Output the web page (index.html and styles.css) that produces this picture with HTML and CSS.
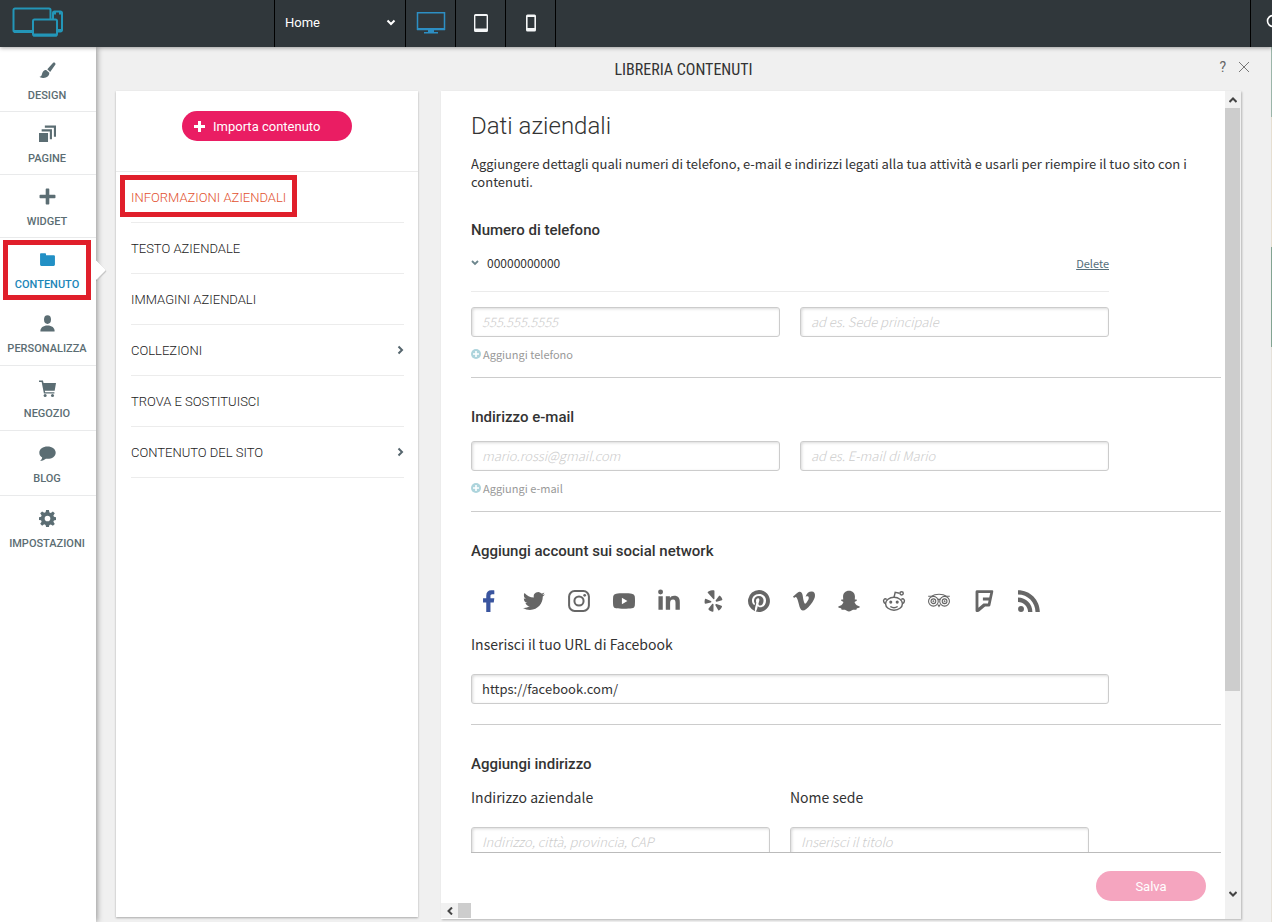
FILE: index.html
```html
<!DOCTYPE html>
<html lang="it">
<head>
<meta charset="utf-8">
<title>Libreria contenuti</title>
<link rel="stylesheet" href="styles.css">
</head>
<body>
<header class="topbar">
  <div class="brand">
    <svg width="52" height="32" viewBox="0 0 52 32" fill="none" stroke="#2396b8" stroke-width="2"><path d="M20 25H3a1.500 1.500 0 0 1-1.500-1.500V3A1.500 1.500 0 0 1 3 1.500h34A1.500 1.500 0 0 1 38.500 3v9"/><path d="M2 24.500h18" stroke-width="3"/><path d="M41 12V6a1.500 1.500 0 0 1 1.500-1.500h6A1.500 1.500 0 0 1 50 6v17a1.500 1.500 0 0 1-1.500 1.500H46"/><path d="M41 6h3M47 6h3M46 23.500h4" stroke-width="3"/><rect x="21" y="12.500" width="24" height="16" rx="1.500"/><path d="M21 28h24" stroke-width="3"/></svg>
  </div>
  <button class="page-select" type="button"><span>Home</span>
    <svg width="10" height="7" viewBox="0 0 10 7" fill="none" stroke="#fff" stroke-width="2"><path d="M1.500 1.500 5 5l3.500-3.500"/></svg>
  </button>
  <button class="device" type="button" aria-label="Desktop">
    <svg width="30" height="24" viewBox="0 0 30 24"><path fill="none" stroke="#2d8fc4" stroke-width="1.500" d="M1.500 1.700h27v16.500h-27z"/><path d="M1 17h28v2.200H1zM12 19h6v2h4v1.500H8V21h4z" fill="#2d8fc4"/></svg>
  </button>
  <button class="device" type="button" aria-label="Tablet">
    <svg width="16" height="20" viewBox="0 0 16 20" fill="#f4f6f7" fill-rule="evenodd"><path d="M2.500 1h11A1.500 1.500 0 0 1 15 2.500v15a1.500 1.500 0 0 1-1.500 1.500h-11A1.500 1.500 0 0 1 1 17.500v-15A1.500 1.500 0 0 1 2.500 1zM2.400 3v12.500h11.200V3z"/></svg>
  </button>
  <button class="device" type="button" aria-label="Smartphone">
    <svg width="12" height="18" viewBox="0 0 12 18" fill="#f4f6f7" fill-rule="evenodd"><path d="M2.500.5h7A1.500 1.500 0 0 1 11 2v14a1.500 1.500 0 0 1-1.500 1.500h-7A1.500 1.500 0 0 1 1 16V2A1.500 1.500 0 0 1 2.500.5zM2.600 3v11h6.800V3z"/></svg>
  </button>
  <div class="topbar-space"></div>
  <button class="history" type="button" aria-label="Annulla">
    <svg width="14" height="14" viewBox="0 0 14 14" fill="none" stroke="#fff" stroke-width="1.600"><circle cx="7" cy="7" r="5.500"/></svg>
  </button>
</header>

<div class="workspace">
  <nav class="sidebar">
    <a class="side-item" href="#design"><svg class="side-icon" viewBox="0 0 16 16"><path d="M13.300.7c1.100-1 2.900.5 2 1.900L10.500 9.300 7.800 6.900zM7 7.700l2.700 2.400c.2 3.200-2.500 5.200-6 4.900-1.600-.1-2.700-.7-3.200-1.200 2.600-.2 2-2.900 3.200-4.700.9-1.300 2.300-1.700 3.300-1.400z"/></svg>DESIGN</a>
    <a class="side-item" href="#pagine"><svg class="side-icon" viewBox="0 0 16 16"><path d="M0 7.500h8.500V16H0zM2.500 4h9.700v9.500h-2V6H2.500zM5.500.5H16V11h-2V2.500H5.500z"/></svg>PAGINE</a>
    <a class="side-item" href="#widget"><svg class="side-icon" viewBox="0 0 16 16"><path d="M6.300 1.200q0-.7.700-.7h2q.7 0 .7.700v5.100h5q.8 0 .8.700v2q0 .7-.8.700h-5v5.100q0 .7-.7.700H7q-.7 0-.7-.7V9.700h-5Q.5 9.700.5 9V7q0-.7.8-.7h5z"/></svg>WIDGET</a>
    <a class="side-item active" href="#contenuto" aria-current="page"><svg class="side-icon" viewBox="0 0 16 16"><path d="M1 2.800Q1 2 1.800 2h4q.8 0 .8.800V4h7.300q1.100 0 1.100 1v7.800q0 1.200-1.200 1.200H2.200Q1 14 1 12.800z"/></svg>CONTENUTO</a>
    <a class="side-item tall" href="#personalizza"><svg class="side-icon" viewBox="0 0 16 18"><ellipse cx="8" cy="4.800" rx="3.700" ry="4.600"/><path d="M.5 17.500c-.3-4 3-6.300 7.500-6.300s7.800 2.300 7.500 6.300z"/></svg>PERSONALIZZA</a>
    <a class="side-item tall" href="#negozio"><svg class="side-icon" viewBox="0 0 18 18"><path d="M0 .5h4.200l.6 2.700H18l-1.400 8.300H6.200l.3 1.400h9.800v1.300H5.200L2.800 2H0z"/><circle cx="6.500" cy="16.300" r="1.600"/><circle cx="14.300" cy="16.300" r="1.600"/></svg>NEGOZIO</a>
    <a class="side-item tall" href="#blog"><svg class="side-icon" viewBox="0 0 16 16"><path d="M8 1.500c4.300 0 7.700 2.400 7.700 5.700S12.300 13 8 13l-1.500-.1C5 14.200 3 14.900 1 14.800c1.300-.9 1.900-2 2-3C1.200 10.600.3 9 .3 7.200.3 3.900 3.700 1.500 8 1.500z"/></svg>BLOG</a>
    <a class="side-item tall last" href="#impostazioni"><svg class="side-icon" viewBox="0 0 24 24" fill-rule="evenodd"><path d="m10 0h4l.7 3.500 2 .8L19.600 2l2.700 2.700-2 2.900.8 2 3.400.6v3.900l-3.400.6-.8 2 2 2.900-2.700 2.700-2.900-2-2 .8L14 24h-4l-.7-3-2-.8-2.900 2-2.700-2.700 2-2.900-.8-2-2.900-.5v-4l2.900-.5.8-2-2-2.900 2.700-2.700 2.900 2 2-.8zM12 8a4 4 0 1 0 0 8 4 4 0 0 0 0-8z"/></svg>IMPOSTAZIONI</a>
  </nav>

  <main class="library">
    <div class="library-head">
      <h1 class="library-title">LIBRERIA CONTENUTI</h1>
      <div class="head-tools">
        <button class="plain" type="button" aria-label="Aiuto">?</button>
        <button class="plain" type="button" aria-label="Chiudi"><svg width="12" height="12" viewBox="0 0 12 12" stroke="#777" fill="none"><path d="m1 1 10 10M11 1 1 11"/></svg></button>
      </div>
    </div>

    <div class="panels">
      <aside class="menu-card">
        <div class="import-area">
          <button class="pill import" type="button"><svg width="11" height="11" viewBox="0 0 11 11" fill="#fff"><path d="M4 0h3v4h4v3H7v4H4V7H0V4h4z"/></svg>Importa contenuto</button>
        </div>
        <nav class="menu">
          <a class="menu-item selected" href="#info">INFORMAZIONI AZIENDALI</a>
          <a class="menu-item" href="#testo">TESTO AZIENDALE</a>
          <a class="menu-item" href="#immagini">IMMAGINI AZIENDALI</a>
          <a class="menu-item" href="#collezioni">COLLEZIONI<svg width="7" height="10" viewBox="0 0 7 10" fill="none" stroke="#56666e" stroke-width="2"><path d="m1.500 1.500 3.500 3.500-3.500 3.500"/></svg></a>
          <a class="menu-item" href="#trova">TROVA E SOSTITUISCI</a>
          <a class="menu-item" href="#sito">CONTENUTO DEL SITO<svg width="7" height="10" viewBox="0 0 7 10" fill="none" stroke="#56666e" stroke-width="2"><path d="m1.500 1.500 3.500 3.500-3.500 3.500"/></svg></a>
        </nav>
      </aside>

      <section class="data-card">
        <div class="data-body">
          <div class="data-scroll">
            <h2 class="data-title">Dati aziendali</h2>
            <p class="intro">Aggiungere dettagli quali numeri di telefono, e-mail e indirizzi legati alla tua attività e usarli per riempire il tuo sito con i contenuti.</p>

            <div class="group">
              <h3 class="group-title">Numero di telefono</h3>
              <div class="phone-row">
                <svg width="8" height="6" viewBox="0 0 8 6" fill="none" stroke="#6d868d" stroke-width="1.800"><path d="m1 1 3 3 3-3"/></svg>
                <span class="phone">00000000000</span>
                <a class="delete" href="#delete">Delete</a>
              </div>
              <div class="fields">
                <input class="field" type="text" placeholder="555.555.5555" aria-label="Telefono">
                <input class="field" type="text" placeholder="ad es. Sede principale" aria-label="Etichetta telefono">
              </div>
              <button class="add" type="button"><svg width="10" height="10" viewBox="0 0 10 10"><circle cx="5" cy="5" r="5" fill="#add4dc"/><path d="M5 2v6M2 5h6" stroke="#fff" stroke-width="1.600"/></svg>Aggiungi telefono</button>
            </div>

            <div class="group">
              <h3 class="group-title">Indirizzo e-mail</h3>
              <div class="fields near">
                <input class="field" type="email" placeholder="mario.rossi@gmail.com" aria-label="E-mail">
                <input class="field" type="text" placeholder="ad es. E-mail di Mario" aria-label="Etichetta e-mail">
              </div>
              <button class="add" type="button"><svg width="10" height="10" viewBox="0 0 10 10"><circle cx="5" cy="5" r="5" fill="#add4dc"/><path d="M5 2v6M2 5h6" stroke="#fff" stroke-width="1.600"/></svg>Aggiungi e-mail</button>
            </div>

            <div class="group">
              <h3 class="group-title">Aggiungi account sui social network</h3>
              <div class="socials">
                <button class="social fb" type="button" aria-label="Facebook"><svg viewBox="0 0 24 24"><path d="M9 24V13.500H5.500V9H9V6.200C9 2.400 11 .3 14.500.3c1.500 0 2.900.1 3.300.2v4.100h-2.200c-1.600 0-2 .8-2 2V9h4.200l-.6 4.500h-3.600V24z"/></svg></button>
                <button class="social" type="button" aria-label="Twitter"><svg viewBox="0 0 24 24"><path d="M23.950 4.570a10 10 0 0 1-2.820.770 4.960 4.960 0 0 0 2.160-2.720c-.95.550-2 .950-3.130 1.180a4.920 4.920 0 0 0-8.380 4.480C7.690 8.090 4.070 6.130 1.640 3.160a4.820 4.820 0 0 0-.67 2.480c0 1.710.87 3.210 2.190 4.100a4.900 4.900 0 0 1-2.230-.62v.06a4.920 4.920 0 0 0 3.950 4.830 5 5 0 0 1-2.210.08 4.940 4.940 0 0 0 4.600 3.420A9.870 9.870 0 0 1 0 19.540a13.990 13.990 0 0 0 7.550 2.210c9.050 0 14-7.500 14-13.980 0-.21 0-.42-.02-.63a9.930 9.930 0 0 0 2.420-2.570z"/></svg></button>
                <button class="social" type="button" aria-label="Instagram"><svg viewBox="0 0 24 24"><rect x="1.200" y="1.200" width="21.600" height="21.600" rx="6" fill="none" stroke="#666" stroke-width="2.200"/><circle cx="12" cy="12" r="5" fill="none" stroke="#666" stroke-width="2.200"/><circle cx="18.200" cy="5.800" r="1.500"/></svg></button>
                <button class="social" type="button" aria-label="YouTube"><svg viewBox="0 0 24 24" fill-rule="evenodd"><path d="M3.500 4C7 3.300 17 3.300 20.500 4c2.200.4 3 1.600 3.300 3.200.3 3 .3 6.600 0 9.600-.3 1.600-1.100 2.800-3.300 3.200-3.500.7-13.500.7-17 0-2.200-.4-3-1.600-3.300-3.200-.3-3-.3-6.600 0-9.600C.5 5.600 1.300 4.400 3.500 4zm6.200 4.500v7l6-3.500z"/></svg></button>
                <button class="social" type="button" aria-label="LinkedIn"><svg viewBox="0 0 24 24"><path d="M.5 6.800h4.700V21.500H.5zM2.800-.5a2.700 2.700 0 1 1 0 5.400 2.700 2.700 0 0 1 0-5.400zM8.500 6.800H13v2c.9-1.500 2.500-2.400 4.600-2.400 4.700 0 6.200 2.700 6.200 7.100v8h-4.700v-7.300c0-2-.3-3.900-2.700-3.900-2.500 0-3.200 1.800-3.200 3.900v7.300H8.500z"/></svg></button>
                <button class="social" type="button" aria-label="Yelp"><svg viewBox="0 0 24 24"><path d="M5.500 1.800C7.500.6 10 .2 11.700.3c.5 0 .8.300.8.800v8.300c0 .8-.9 1-1.300.4L5.200 2.900c-.3-.4-.2-.8.300-1.100zM2.900 9.600l5.700 2.300c.8.400.7 1.500-.1 1.700l-5.700 1.300c-.5.100-.9-.2-1-.7-.2-1.400-.1-2.900.3-4.100.1-.5.500-.7.800-.5zM10 15.200c.6-.6 1.500-.3 1.500.6l-.1 7.200c0 .5-.4.800-.9.700-1.400-.3-3.300-1.200-4.300-2.200-.4-.3-.4-.8-.1-1.200zM14.700 15.300l5.500 1.900c.5.200.7.600.5 1.100-.6 1.500-1.700 3-2.900 3.900-.4.300-.9.200-1.100-.2l-3.200-5.300c-.4-.7.300-1.700 1.200-1.400zM13.900 11.300l3.500-4.800c.3-.4.700-.4 1.100-.1 1.100.9 2.100 2.300 2.600 3.700.2.500-.1.900-.5 1l-5.600 1.600c-.9.200-1.600-.7-1.100-1.400z"/></svg></button>
                <button class="social" type="button" aria-label="Pinterest"><svg viewBox="0 0 24 24"><path d="M12 0a12 12 0 0 0-4.370 23.170c-.1-.94-.2-2.400.04-3.430l1.410-5.960s-.36-.72-.36-1.780c0-1.670.97-2.910 2.170-2.910 1.020 0 1.520.77 1.520 1.690 0 1.030-.65 2.570-.99 3.990-.29 1.190.6 2.170 1.770 2.170 2.130 0 3.770-2.250 3.770-5.490 0-2.870-2.060-4.870-5.010-4.870a5.190 5.190 0 0 0-5.410 5.200c0 1.030.39 2.140.89 2.740.1.120.11.230.08.350l-.33 1.360c-.05.220-.17.260-.4.160-1.500-.7-2.430-2.880-2.430-4.650 0-3.780 2.750-7.260 7.930-7.260 4.160 0 7.400 2.970 7.400 6.930 0 4.140-2.610 7.460-6.230 7.460-1.210 0-2.360-.63-2.750-1.380l-.75 2.850c-.27 1.050-1 2.350-1.490 3.150A12 12 0 1 0 12 0z"/></svg></button>
                <button class="social" type="button" aria-label="Vimeo"><svg viewBox="0 0 24 24"><path d="M23.980 6.420c-.11 2.340-1.740 5.540-4.900 9.600C15.810 20.260 13.050 22.380 10.790 22.380c-1.400 0-2.580-1.290-3.550-3.880L5.300 11.400C4.580 8.820 3.810 7.530 2.990 7.530c-.18 0-.81.380-1.880 1.130L0 7.200c1.180-1.040 2.350-2.080 3.500-3.120 1.580-1.370 2.770-2.090 3.560-2.160 1.870-.18 3.020 1.100 3.450 3.840.47 2.950.79 4.790.97 5.510.54 2.450 1.130 3.670 1.780 3.670.5 0 1.260-.8 2.270-2.390 1-1.590 1.540-2.800 1.620-3.630.14-1.370-.4-2.060-1.620-2.060-.58 0-1.170.13-1.780.39C14.930 3.400 17.190 1.500 20.530 1.610c2.480.070 3.650 1.680 3.450 4.810z"/></svg></button>
                <button class="social" type="button" aria-label="Snapchat"><svg viewBox="0 0 24 24"><path d="M12 .8c4 0 6.500 2.600 6.500 6.500l-.2 3.100c.7.300 1.500-.4 2.100.1.900.9-.6 1.600-1.600 2-.8.400-.7 1-.3 1.800 1 2 2.500 3.100 5 3.600.6.200.4.900-.1 1.200-.7.500-1.700.7-2.700.9-.4.400-.2 1.200-.7 1.500-.8.300-2.400-.2-3.600.1-1.600.4-2.500 1.900-4.400 1.900s-2.800-1.500-4.400-1.900c-1.200-.3-2.800.2-3.600-.1-.5-.3-.3-1.100-.7-1.500-1-.2-2-.4-2.700-.9-.5-.3-.7-1-.1-1.200 2.500-.5 4-1.600 5-3.600.4-.8.500-1.400-.3-1.800-1-.4-2.500-1.100-1.600-2 .6-.5 1.400.2 2.100-.1l-.2-3.100C5.500 3.400 8 .8 12 .8z"/></svg></button>
                <button class="social line" type="button" aria-label="Reddit"><svg viewBox="0 0 24 24"><ellipse cx="12" cy="15" rx="9.200" ry="7"/><path d="M4 10.500C2 8.500 0 10.500.8 12.800c.3.900 1 1.600 2 1.900M20 10.500c2-2 4 0 3.200 2.300-.3.900-1 1.600-2 1.900M12 8l1.300-5.500 4.700 1"/><circle cx="20.300" cy="3.600" r="1.800"/><path d="M8 18c2.200 1.500 5.800 1.500 8 0"/><circle cx="8.500" cy="13.200" r=".9"/><circle cx="15.500" cy="13.200" r=".9"/></svg></button>
                <button class="social line thin" type="button" aria-label="TripAdvisor"><svg viewBox="0 0 24 24"><circle cx="5.900" cy="12.300" r="5.300"/><circle cx="18.100" cy="12.300" r="5.300"/><circle cx="5.900" cy="12.300" r="2.600"/><circle cx="18.100" cy="12.300" r="2.600"/><circle cx="5.900" cy="12.300" r=".4"/><circle cx="18.100" cy="12.300" r=".4"/><path d="M.2 6.800h3.600C8 4 16 4 20.200 6.800h3.600M10.700 15.800 12 18l1.300-2.200M11 11q1-2 2 0"/></svg></button>
                <button class="social" type="button" aria-label="Foursquare"><svg viewBox="0 0 24 24"><path fill-rule="evenodd" d="M4 .3h16.800q1.600 0 1.300 1.500l-3.200 15q-.3 1.200-1.500 1.200h-4.200l-6.500 5.500q-3.900 1.500-3.900-1V2q0-1.700 1.200-1.700zM5.900 3.400v16l5.500-4.600h4.900l.7-3.300h-6.200V8.300h6.900l1.100-4.900z"/></svg></button>
                <button class="social" type="button" aria-label="RSS"><svg viewBox="0 0 24 24"><path d="M0 .2C13.200.2 23.800 10.800 23.800 24h-4.700C19.100 13.400 10.600 4.900 0 4.900zM0 8.300c8.700 0 15.700 7 15.700 15.700H11c0-6.100-4.900-11-11-11z"/><circle cx="3.300" cy="20.700" r="3.200"/></svg></button>
              </div>
              <label class="label" for="fb-url">Inserisci il tuo URL di Facebook</label>
              <div class="fields spaced">
                <input class="field" id="fb-url" type="text" value="https://facebook.com/">
              </div>
            </div>

            <div class="group">
              <h3 class="group-title">Aggiungi indirizzo</h3>
              <div class="address">
                <div class="column"><label class="label" for="addr">Indirizzo aziendale</label><input class="field" id="addr" type="text" placeholder="Indirizzo, città, provincia, CAP"></div>
                <div class="column"><label class="label" for="place">Nome sede</label><input class="field" id="place" type="text" placeholder="Inserisci il titolo"></div>
              </div>
            </div>
          </div>
          <div class="data-foot"><button class="pill save" type="button">Salva</button></div>
          <div class="hbar"><span class="arrow"><svg width="6" height="8" viewBox="0 0 6 8" fill="none" stroke="#444" stroke-width="2"><path d="M5 .5 1.500 4 5 7.500"/></svg></span><span class="hthumb"></span></div>
        </div>
        <div class="vbar">
          <span class="arrow"><svg width="8" height="6" viewBox="0 0 8 6" fill="none" stroke="#444" stroke-width="2"><path d="M.5 5 4 1.500 7.500 5"/></svg></span>
          <span class="vtrack"><span class="vthumb"></span></span>
          <span class="arrow low"><svg width="8" height="6" viewBox="0 0 8 6" fill="none" stroke="#444" stroke-width="2"><path d="M.5 1 4 4.500 7.500 1"/></svg></span>
        </div>
      </section>
    </div>
  </main>
  <div class="site-edge"></div>
</div>
</body>
</html>
```

FILE: styles.css
```css
*, *::before, *::after { box-sizing: border-box; }
body {
  margin: 0;
  height: 100vh;
  display: flex;
  flex-direction: column;
  overflow: hidden;
  background: #f0f0f0;
  color: #333;
  font-family: Roboto, "Liberation Sans", sans-serif;
}
h1, h2, h3, p { margin: 0; }
a { color: inherit; text-decoration: none; }
button { font: inherit; color: inherit; border: 0; padding: 0; background: none; cursor: pointer; }
svg { flex: none; display: block; }

.topbar {
  position: relative;
  z-index: 2;
  flex: none;
  display: flex;
  height: 47px;
  background: #30373b;
  box-shadow: 0 1px 4px rgba(0, 0, 0, .35);
}
.brand { width: 274px; padding: 7px 12px; }
.page-select {
  width: 131px;
  padding: 0 9px 2px 10px;
  display: flex;
  align-items: center;
  justify-content: space-between;
  border-left: 1px solid #000;
  color: #fff;
  font-size: 13px;
}
.device {
  width: 50px;
  padding-bottom: 2px;
  display: flex;
  align-items: center;
  justify-content: center;
  border-left: 1px solid #000;
}
.topbar-space { flex: 1; border-left: 1px solid #000; }
.history { width: 22px; padding: 0 0 6px 15px; display: flex; align-items: center; border-left: 1px solid #000; }

.workspace { flex: 1; min-height: 0; display: flex; }
.sidebar {
  position: relative;
  z-index: 1;
  width: 96px;
  flex: none;
  padding-top: 2px;
  background: #fff;
  box-shadow: 1px 0 6px rgba(0, 0, 0, .4);
}
.side-item {
  position: relative;
  height: 63px;
  padding: 5px 2px 0 0;
  display: flex;
  flex-direction: column;
  align-items: center;
  justify-content: center;
  gap: 9px;
  border-bottom: 1px solid #e9eaeb;
  color: #5b6d73;
  font-size: 11px;
  line-height: 16px;
  font-weight: 500;
}
.side-item.tall { height: 65px; }
.side-item.last { border-color: transparent; }
.side-icon { width: 17px; height: 17px; fill: #5b6d73; }
.side-item.active { color: #1c86b8; border-color: transparent; }
.active .side-icon { fill: #2290c5; }
.side-item.active::before {
  content: "";
  position: absolute;
  right: -7px;
  top: 25px;
  width: 14px;
  height: 14px;
  background: #fff;
  transform: rotate(45deg);
  box-shadow: 1px -1px 0 #ccc, 1px 1px 1px #999;
  clip-path: polygon(0 0, 140% 0, 140% 140%);
}
.side-item.active::after {
  content: "";
  position: absolute;
  inset: 2px 5px 0 3px;
  border: 5px solid #e01f2b;
}

.library { flex: 1; min-width: 0; display: flex; flex-direction: column; padding: 0 30px 3px 20px; }
.library-head { position: relative; flex: none; height: 44px; display: flex; align-items: center; justify-content: center; padding-left: 10px; }
.library-title { font: 400 16px "Roboto Condensed", "Liberation Sans Narrow", Roboto, sans-serif; color: #333; }
.head-tools { position: absolute; right: -9px; top: 8px; display: flex; gap: 12px; align-items: center; }
.plain { color: #666; font-size: 14px; line-height: 24px; }

.panels { flex: 1; min-height: 0; display: flex; gap: 23px; }
.menu-card { width: 302px; flex: none; margin-bottom: 2px; background: #fff; box-shadow: 0 1px 2px rgba(0, 0, 0, .3); }
.import-area { height: 81px; padding-top: 20px; padding-left: 66px; border-bottom: 1px solid #ebebeb; }
.pill { height: 30px; border-radius: 15px; color: #fff; font-size: 13px; }
.import { width: 170px; display: flex; align-items: center; gap: 8px; padding-left: 12px; background: #ea1d63; }
.menu { padding: 0 14px 0 15px; }
.menu-item {
  position: relative;
  height: 51px;
  display: flex;
  align-items: center;
  justify-content: space-between;
  border-bottom: 1px solid #ececec;
  font-size: 13px;
  font-weight: 300;
  color: #222;
}
.menu-item.selected { color: #e2512f; }
.menu-item.selected::after {
  content: "";
  position: absolute;
  left: -11px;
  top: 3px;
  width: 177px;
  height: 42px;
  border: 5px solid #e01f2b;
}

.data-card { flex: 1; min-width: 0; display: flex; background: #fff; box-shadow: 1px 1px 2px rgba(0, 0, 0, .25); }
.data-body { flex: 1; min-width: 0; display: flex; flex-direction: column; font-family: "Noto Sans CJK SC", "Open Sans", sans-serif; }
.data-scroll { flex: 1; min-height: 0; overflow: hidden; margin: 0 4px 0 30px; padding-top: 20px; }
.data-title { font: 300 24px/30px Roboto, sans-serif; }
.intro { margin-top: 14px; padding-right: 20px; font-size: 13px; line-height: 18px; }
.group { border-bottom: 1px solid #ccc; padding-bottom: 12px; }
.intro + .group, .group + .group { padding-top: 29px; }
.group:has(.spaced) { padding-bottom: 20px; }
.group-title { font: 500 15px/20px Roboto, sans-serif; }
.phone-row { max-width: 638px; margin-top: 11px; padding-bottom: 16px; border-bottom: 1px solid #ebebeb; display: flex; align-items: center; gap: 8px; font-size: 12px; line-height: 24px; }
.phone { flex: 1; }
.delete { color: #546e7a; font-size: 11px; line-height: 20px; text-decoration: underline; }
.fields { display: flex; gap: 20px; max-width: 638px; margin-top: 15px; }
.fields.near { margin-top: 14px; }
.fields.spaced { margin-top: 20px; }
.field {
  flex: 1;
  min-width: 0;
  width: 100%;
  height: 30px;
  padding: 0 10px 2px;
  border: 1px solid #ccc;
  border-radius: 3px;
  background: #fff;
  box-shadow: inset 1px 1px 3px rgba(0, 0, 0, .15);
  font: 400 13px "Noto Sans CJK SC", "Open Sans", sans-serif;
  color: #333;
}
.field::placeholder { color: #ccc; font-style: italic; font-weight: 300; opacity: 1; }
.add { display: flex; align-items: center; gap: 2px; margin-top: 7px; margin-bottom: 1px; font-size: 11px; line-height: 20px; color: #999; }
.socials { display: flex; gap: 9px; margin-top: 25px; }
.social { width: 36px; height: 30px; display: flex; align-items: center; justify-content: center; fill: #666; }
.social svg { width: 22px; height: 22px; overflow: visible; }
.social.fb { fill: #3a559f; }
.social.line { fill: none; stroke: #666; stroke-width: 1.6; }
.social.thin { stroke-width: 1.2; }
.label { display: block; font-size: 14px; line-height: 20px; }
.socials + .label { margin-top: 18px; }
.address { display: flex; gap: 20px; max-width: 618px; margin-top: 13px; }
.column { flex: 1; display: flex; flex-direction: column; gap: 20px; }
.column .field { flex: none; }
.data-foot { flex: none; height: 51px; margin: 0 4px 0 30px; padding: 18px 15px 0 0; display: flex; justify-content: flex-end; border-top: 1px solid #bbb; }
.save { width: 110px; background: #f5a5bf; font-family: Roboto, sans-serif; }
.hbar { flex: none; height: 16px; display: flex; padding-bottom: 1px; }
.hbar .arrow { width: 17px; }
.hthumb { width: 13px; background: #cdcdcd; }
.arrow { display: flex; align-items: center; justify-content: center; height: 17px; background: #f1f1f1; }
.hbar .arrow { height: 15px; }
.vbar { width: 16px; flex: none; display: flex; flex-direction: column; padding-right: 1px; background: #f1f1f1; }
.vtrack { flex: 1; }
.vthumb { display: block; height: 75%; background: #cdcdcd; }
.arrow.low { margin-bottom: 17px; }
.site-edge { width: 1px; flex: none; background: linear-gradient(#9bb5a9 70px, #e6dfd2 70px 200px, #83a492 200px 300px, #e6e2da 300px); }
```
